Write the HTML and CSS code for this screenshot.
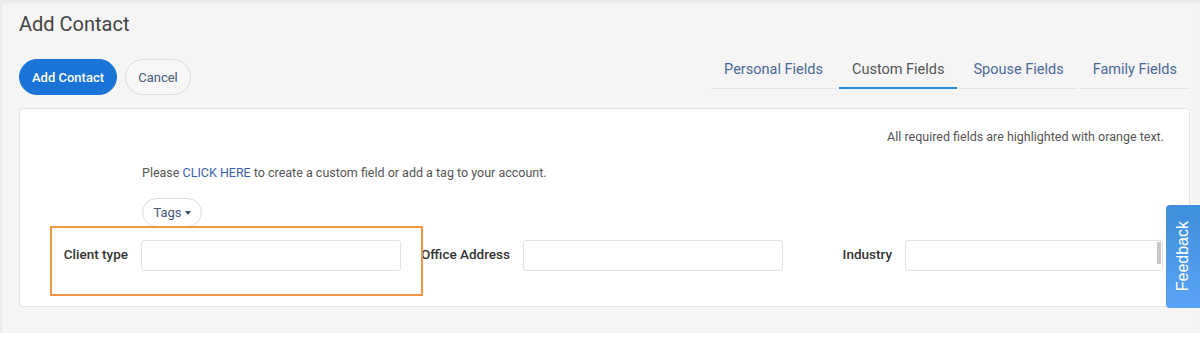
FILE: index.html
```html
<!DOCTYPE html>
<html>
<head>
<meta charset="utf-8">
<link rel="stylesheet" href="styles.css">
</head>
<body>
<div class="page">
  <h1 class="title">Add Contact</h1>
  <div class="toolbar">
    <div class="actions">
      <button class="btn btn-primary">Add Contact</button>
      <button class="btn btn-default">Cancel</button>
    </div>
    <ul class="tabs">
      <li class="tab">Personal Fields</li>
      <li class="tab active">Custom Fields</li>
      <li class="tab">Spouse Fields</li>
      <li class="tab">Family Fields</li>
    </ul>
  </div>
  <div class="card">
    <p class="required-note">All required fields are highlighted with orange text.</p>
    <div class="intro">
      <p class="hint">Please <a class="link">CLICK HERE</a> to create a custom field or add a tag to your account.</p>
      <button class="btn-tags">Tags <span class="caret"></span></button>
    </div>
    <div class="fields">
      <div class="highlight"></div>
      <div class="field">
        <label class="field-label">Client type</label>
        <div class="field-input"></div>
      </div>
      <div class="field">
        <label class="field-label">Office Address</label>
        <div class="field-input"></div>
      </div>
      <div class="field">
        <label class="field-label">Industry</label>
        <div class="field-input has-scroll"></div>
      </div>
    </div>
  </div>
  <div class="feedback"><span class="feedback-text">Feedback</span></div>
</div>
</body>
</html>
```

FILE: styles.css
```css
* { box-sizing: border-box; }
html, body { margin: 0; padding: 0; background: #fff; }
body { font-family: Roboto, "Liberation Sans", Arial, sans-serif; color: #444; }

.page {
  position: relative;
  height: 333px;
  background: #f5f5f5;
  border-left: 2px solid #ebebeb;
  padding: 12px 10px 0 17px;
  box-shadow: inset 0 5px 5px -3px rgba(0,0,0,0.07);
}

.title {
  margin: 0;
  font-size: 20px;
  line-height: 24px;
  font-weight: 400;
  color: #444;
}

.toolbar {
  margin-top: 13px;
  display: flex;
  justify-content: space-between;
  align-items: flex-start;
}

.actions { display: flex; gap: 8px; margin-top: 10px; }

.btn {
  height: 36px;
  border-radius: 18px;
  font-family: Roboto, sans-serif;
  font-size: 13px;
  padding: 0 14px;
  cursor: pointer;
}
.btn-primary {
  background: #1a73d6;
  color: #fff;
  border: 1px solid #1a73d6;
  font-weight: 500;
  width: 98px;
  padding: 0;
}
.btn-default {
  background: #f7f7f7;
  color: #4a5a7a;
  border: 1px solid #dcdcdc;
  width: 66px;
  padding: 0;
}

.tabs {
  list-style: none;
  margin: 0;
  padding: 0;
  display: flex;
  gap: 3px;
}
.tab {
  padding: 11px 13px 8px;
  font-size: 14.5px;
  line-height: 20px;
  color: #4b6996;
  border-bottom: 1px solid #e1e5ea;
}
.tab.active {
  color: #555;
  border-bottom: 2px solid #2688d6;
  padding-bottom: 7px;
}

.card {
  position: relative;
  margin-top: 13px;
  height: 199px;
  background: #fff;
  border: 1px solid #e4e4e4;
  border-radius: 4px;
  padding: 19px 25px 0 26px;
}

.required-note {
  margin: 0;
  text-align: right;
  font-size: 12.5px;
  line-height: 18px;
  color: #555;
}

.intro { padding-left: 96px; margin-top: 18px; }
.hint {
  margin: 0;
  font-size: 12.5px;
  line-height: 18px;
  color: #555;
}
.link { color: #3b5fa6; text-decoration: none; }

.btn-tags {
  margin-top: 16px;
  height: 29px;
  width: 60px;
  border-radius: 15px;
  border: 1px solid #dedede;
  background: #fff;
  font-family: Roboto, sans-serif;
  font-size: 13px;
  color: #4a5a7a;
  padding: 0;
  display: inline-flex;
  align-items: center;
  justify-content: center;
  gap: 3px;
}
.caret {
  display: inline-block;
  width: 0;
  height: 0;
  border-left: 3.5px solid transparent;
  border-right: 3.5px solid transparent;
  border-top: 4px solid #3b4a6a;
  margin-top: 1px;
}

.fields {
  position: relative;
  display: grid;
  grid-template-columns: repeat(3, 382px);
  margin-top: 13px;
}
.highlight {
  position: absolute;
  left: 4px;
  top: -14px;
  width: 373px;
  height: 70px;
  border: 2px solid #f59443;
  pointer-events: none;
}
.field {
  display: flex;
  align-items: center;
}
.field-label {
  width: 82px;
  margin-right: 13px;
  margin-bottom: 3px;
  display: flex;
  justify-content: flex-end;
  white-space: nowrap;
  font-size: 13.5px;
  font-weight: 500;
  color: #333;
}
.field-input {
  position: relative;
  width: 260px;
  height: 31px;
  border: 1px solid #e2e2e2;
  border-radius: 3px;
  background: #fff;
}
.field-input.has-scroll { width: 258px; }
.field-input.has-scroll::after {
  content: "";
  position: absolute;
  right: 1px;
  top: 1px;
  width: 4px;
  height: 22px;
  background: #c8c8c8;
}

.feedback {
  position: absolute;
  right: 0;
  top: 205px;
  width: 34px;
  height: 103px;
  border-radius: 4px 0 0 4px;
  background: linear-gradient(to bottom, #3f8fda, #5aa2f6);
  display: flex;
  align-items: center;
  justify-content: center;
}
.feedback-text {
  writing-mode: vertical-rl;
  transform: rotate(180deg);
  color: #fff;
  font-family: "Liberation Sans", Arial, sans-serif;
  font-size: 16px;
  line-height: 16px;
}
```
